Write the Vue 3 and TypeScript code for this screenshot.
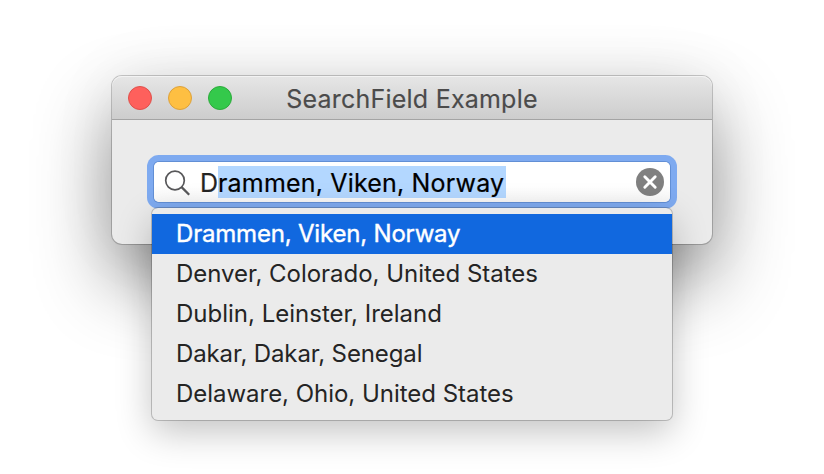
<script setup lang="ts">
import { ref } from 'vue'

interface Place {
  name: string
  kind: string
}

const places: Place[] = [
  { name: 'Drammen, Viken, Norway', kind: 'drammen' },
  { name: 'Denver, Colorado, United States', kind: 'denver' },
  { name: 'Dublin, Leinster, Ireland', kind: 'dublin' },
  { name: 'Dakar, Dakar, Senegal', kind: 'dakar' },
  { name: 'Delaware, Ohio, United States', kind: 'delaware' },
]
const active = ref(0)
const typed = ref('D')
const completion = ref('rammen, Viken, Norway')
</script>

<template>
  <main class="desktop">
    <section class="window">
      <header class="titlebar">
        <div class="lights">
          <span class="light close"></span>
          <span class="light minimise"></span>
          <span class="light zoom"></span>
        </div>
        <h1 class="title">SearchField Example</h1>
      </header>
      <div class="content">
        <div class="field">
          <svg class="glass" width="28" height="28" viewBox="0 0 28 28" fill="none">
            <circle cx="11" cy="11.5" r="9.3" stroke="#58585a" stroke-width="1.7" />
            <path d="M17.6 18.1L25.2 25.7" stroke="#58585a" stroke-width="2.3" />
          </svg>
          <div class="query"><span class="typed">{{ typed }}</span><span class="selection">{{ completion }}</span></div>
          <svg class="clear" width="28" height="28" viewBox="0 0 28 28" fill="none">
            <circle cx="14" cy="14" r="14" fill="#808080" />
            <path d="M8.8 8.8L19.2 19.2M19.2 8.8L8.8 19.2" stroke="#fff" stroke-width="2.9" stroke-linecap="round" />
          </svg>
        </div>
        <ul class="menu">
          <li
            v-for="(place, i) in places"
            :key="place.name"
            class="item"
            :class="[place.kind, { active: i === active }]"
            @mouseenter="active = i"
          ><span>{{ place.name }}</span></li>
        </ul>
      </div>
    </section>
  </main>
</template>

<style>
body {
  margin: 0;
  background: #fff;
  overflow: hidden;
}
</style>

<style scoped>
.desktop {
  box-sizing: border-box;
  width: 824px;
  height: 474px;
  padding: 76px 112px 0;
  font-family: Inter, "Liberation Sans", sans-serif;
  overflow: hidden;
}
.window {
  width: 600px;
  height: 168px;
  border-radius: 10px;
  background: #ebebeb;
  box-shadow: 0 0 0 1px rgba(0, 0, 0, 0.2), 0 36px 76px rgba(0, 0, 0, 0.44), 0 0 70px rgba(0, 0, 0, 0.06);
}
.titlebar {
  box-sizing: border-box;
  position: relative;
  display: flex;
  align-items: center;
  justify-content: center;
  height: 44px;
  border-bottom: 1px solid #a4a4a4;
  border-radius: 10px 10px 0 0;
  background: linear-gradient(#e6e6e6, #cdcdcd);
  box-shadow: inset 0 1px 0 #f3f3f3;
}
.lights {
  position: absolute;
  left: 16px;
  top: 10px;
  display: flex;
  gap: 16px;
}
.light {
  box-sizing: border-box;
  width: 24px;
  height: 24px;
  border-radius: 50%;
}
.close { background: #fe605c; border: 1px solid #df504b; }
.minimise { background: #febf42; border: 1px solid #dda13a; }
.zoom { background: #34c94b; border: 1px solid #2cab3b; }
.title {
  margin: 2px 0 0;
  font-size: 25px;
  line-height: 30px;
  font-weight: 400;
  letter-spacing: 0.22px;
  color: #4b4b4b;
  -webkit-text-stroke: 0.15px currentColor;
  white-space: nowrap;
}
.content {
  position: relative;
  padding: 42px 42px 0;
}
.field {
  box-sizing: border-box;
  display: flex;
  align-items: center;
  width: 516px;
  height: 40px;
  padding: 0 6px 0 10px;
  border-radius: 5px;
  background: linear-gradient(#fff 60%, #f6f6f6);
  box-shadow: 0 0 0 1px #628fd5, 0 0 0 7px #7eaaf0;
}
.glass { flex: none; margin-top: 1px; }
.query {
  display: flex;
  flex: 1;
  height: 32px;
  margin-left: 8px;
  font-size: 25px;
  line-height: 34px;
  letter-spacing: 0.18px;
  color: #000;
  -webkit-text-stroke: 0.2px currentColor;
  white-space: nowrap;
}
.typed { width: 18px; color: #242424; }
.selection { width: 288px; background: #b3d7ff; }
.clear { flex: none; }
.menu {
  position: absolute;
  left: 40px;
  top: 88px;
  box-sizing: border-box;
  width: 520px;
  height: 212px;
  margin: 0;
  padding: 6px 0;
  list-style: none;
  border-radius: 6px;
  background: #ebebeb;
  box-shadow: 0 0 0 1px rgba(0, 0, 0, 0.2), 0 12px 36px rgba(0, 0, 0, 0.24);
}
.item {
  height: 40px;
  padding-left: 24px;
  font-size: 24px;
  line-height: 40px;
  color: #242424;
  white-space: nowrap;
}
.drammen { letter-spacing: -0.19px; }
.denver, .delaware { letter-spacing: -0.03px; }
.dakar { letter-spacing: -0.12px; }
.active {
  background: #1168df;
  color: #fff;
  -webkit-text-stroke: 0.4px currentColor;
}
</style>
